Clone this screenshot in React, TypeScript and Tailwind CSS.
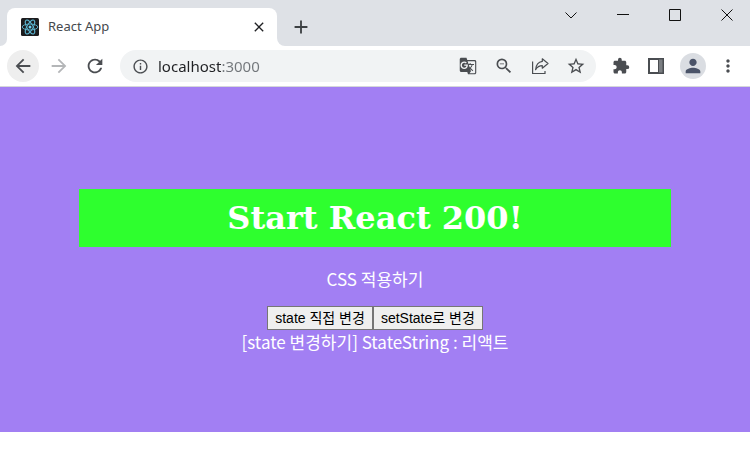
import { useState, type ReactNode } from "react";
import {
  MdArrowBack,
  MdArrowForward,
  MdRefresh,
  MdInfoOutline,
  MdGTranslate,
  MdZoomOut,
  MdStarBorder,
  MdExtension,
  MdPerson,
  MdMoreVert,
  MdClose,
  MdAdd,
} from "react-icons/md";

function ReactLogo() {
  return (
    <svg viewBox="0 0 18 18" className="h-[18px] w-[18px] shrink-0" aria-hidden="true">
      <rect width="18" height="18" rx="1.5" fill="#1c1c1e" />
      <g fill="none" stroke="#5cb8d4" strokeWidth="0.9">
        <ellipse cx="9" cy="9" rx="7.8" ry="3" />
        <ellipse cx="9" cy="9" rx="7.8" ry="3" transform="rotate(60 9 9)" />
        <ellipse cx="9" cy="9" rx="7.8" ry="3" transform="rotate(120 9 9)" />
      </g>
      <circle cx="9" cy="9" r="1.5" fill="#6fd3f2" />
    </svg>
  );
}

function ShareIcon() {
  return (
    <svg viewBox="0 0 18 18" className="h-[18px] w-[18px]" fill="none" stroke="currentColor" strokeWidth="1.2" aria-hidden="true">
      <path d="M1.600 4.500v12h12.400v-2.500" />
      <path d="M11.300 1.800 17 6.500l-5.700 4.700V8.700C8.200 8.700 6.200 10 4.600 12.700 5 8.200 7.300 5 11.300 4.400z" strokeLinejoin="round" />
    </svg>
  );
}

function SidePanelIcon() {
  return (
    <svg viewBox="0 0 16 16" className="h-4 w-4" aria-hidden="true">
      <path d="M10 1h5v14h-5z" fill="#7b7e82" />
      <path d="M0 0h16v16H0zM2 2v12h8V2zM11 1.500v13h3.500v-13z" fill="currentColor" fillRule="evenodd" />
    </svg>
  );
}

function WindowButton({ label, children }: { label: string; children: ReactNode }) {
  return (
    <button aria-label={label} className="flex h-[30px] w-[46px] items-center justify-center text-[#111]">
      <svg viewBox="0 0 12 12" className="h-3 w-3" fill="none" stroke="currentColor" strokeWidth="1" aria-hidden="true">
        {children}
      </svg>
    </button>
  );
}

function TabStrip() {
  return (
    <div className="flex h-[46px] items-start justify-between bg-[#dee1e6]">
      <div className="flex h-full items-end">
        <div className="h-2 w-[7px] bg-white">
          <div className="h-full rounded-br-lg bg-[#dee1e6]" />
        </div>
        <div className="flex h-[38px] w-[270px] items-center rounded-t-lg bg-white pr-[10px] pl-[14px]">
          <ReactLogo />
          <span className="ml-[9px] flex-1 text-[13px] text-[#45494d]">React App</span>
          <button aria-label="Close tab" className="text-[#202124]">
            <MdClose className="h-4 w-4" />
          </button>
        </div>
        <div className="h-2 w-2 bg-white">
          <div className="h-full rounded-bl-lg bg-[#dee1e6]" />
        </div>
        <button aria-label="New tab" className="ml-1 flex h-[38px] w-6 items-center justify-center text-[#3c4043]">
          <MdAdd className="h-[22px] w-[22px]" />
        </button>
      </div>
      <div className="flex gap-[6px]">
        <WindowButton label="Search tabs">
          <path d="M.5 3.500 6 9l5.500-5.500" />
        </WindowButton>
        <WindowButton label="Minimize">
          <path d="M0 5.500h12" />
        </WindowButton>
        <WindowButton label="Maximize">
          <path d="M.5.5h11v11H.5z" />
        </WindowButton>
        <WindowButton label="Close">
          <path d="m.5.5 11 11m0-11-11 11" />
        </WindowButton>
      </div>
    </div>
  );
}

function Toolbar() {
  const [url, setUrl] = useState("localhost:3000");

  return (
    <div className="flex h-[41px] items-center border-b border-[#d5d7da] bg-white pr-3 pl-[7px] text-[#4a4d51]">
      <button aria-label="Back" className="flex h-8 w-8 items-center justify-center rounded-full bg-[#eeeeee]">
        <MdArrowBack className="h-[22px] w-[22px]" />
      </button>
      <button aria-label="Forward" className="ml-1 flex h-8 w-8 items-center justify-center text-[#b4b6b8]">
        <MdArrowForward className="h-[22px] w-[22px]" />
      </button>
      <button aria-label="Reload" className="ml-1 flex h-8 w-8 items-center justify-center">
        <MdRefresh className="h-[22px] w-[22px]" />
      </button>
      <div className="ml-[9px] flex h-8 min-w-0 flex-1 items-center rounded-full bg-[#f1f3f4] pr-[10px] pl-3">
        <button aria-label="View site information">
          <MdInfoOutline className="h-[17px] w-[17px]" />
        </button>
        {/* host is dark, port is dimmed */}
        <input
          aria-label="Address"
          value={url}
          onChange={(e) => setUrl(e.target.value)}
          className="ml-[9px] min-w-0 flex-1 bg-linear-to-r from-[#202124] from-[63px] to-[#72767a] to-[63px] bg-clip-text text-[15px] text-transparent caret-black outline-none"
        />
        <div className="flex items-center gap-[17px]">
          <button aria-label="Translate this page">
            <MdGTranslate className="h-[18px] w-[18px]" />
          </button>
          <button aria-label="Zoom">
            <MdZoomOut className="h-5 w-5" />
          </button>
          <button aria-label="Share">
            <ShareIcon />
          </button>
          <button aria-label="Bookmark">
            <MdStarBorder className="h-5 w-5" />
          </button>
        </div>
      </div>
      <button aria-label="Extensions" className="ml-4">
        <MdExtension className="h-[18px] w-[18px]" />
      </button>
      <button aria-label="Side panel" className="ml-[18px]">
        <SidePanelIcon />
      </button>
      <button aria-label="Profile" className="ml-4 flex h-[26px] w-[26px] items-center justify-center rounded-full bg-[#dadde2] text-[#4a5368]">
        <MdPerson className="h-[22px] w-[22px]" />
      </button>
      <button aria-label="Menu" className="ml-3">
        <MdMoreVert className="h-5 w-5" />
      </button>
    </div>
  );
}

const stateButton =
  "h-6 border border-[#767676] bg-[#efefef] px-[7px] font-['Liberation_Sans','Noto_Sans_CJK_KR',sans-serif] text-sm leading-5 text-black";

export default function App() {
  const [stateString, setStateString] = useState("리액트");

  return (
    <div className="min-h-screen bg-white font-['Noto_Sans','Noto_Sans_CJK_KR',sans-serif]">
      <header>
        <TabStrip />
        <Toolbar />
      </header>
      <main className="bg-[#a27ff3] px-[79px] pt-[102px] pb-[78px] text-center font-['Noto_Sans_CJK_KR',sans-serif] text-[17px] leading-6 text-white">
        <h1 className="bg-[#2eff2e] font-['DejaVu_Serif',serif] text-[32px] leading-[58px] font-bold">
          Start React 200!
        </h1>
        <p className="mt-5">CSS 적용하기</p>
        <div className="mt-[15px] flex justify-center">
          <button className={stateButton} onClick={() => setStateString("리액트")}>
            state 직접 변경
          </button>
          <button className={stateButton} onClick={() => setStateString("리액트200")}>
            setState로 변경
          </button>
        </div>
        <p>[state 변경하기] StateString : {stateString}</p>
      </main>
    </div>
  );
}
